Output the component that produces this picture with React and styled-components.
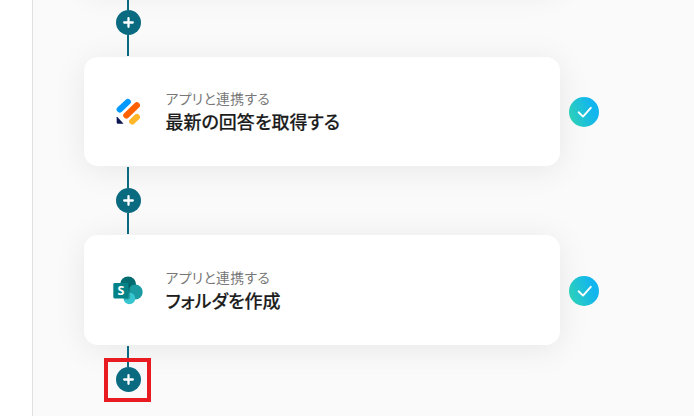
import styled, { createGlobalStyle } from 'styled-components';

const steps = [
  { id: 1, app: 'form', label: 'アプリと連携する', title: '最新の回答を取得する' },
  { id: 2, app: 'sharepoint', label: 'アプリと連携する', title: 'フォルダを作成' },
];

const FormIcon = () => (
  <svg width="32" height="32" viewBox="0 0 32 32">
    <g strokeLinecap="round" strokeWidth="6.1">
      <path d="M7.7 13.5L15.8 5.9" stroke="#0099ff" />
      <path d="M14.3 19.5L24.9 9.3" stroke="#ff6100" />
      <path d="M20.2 25.4L24.9 21" stroke="#ffb629" />
    </g>
    <path d="M5.4 20.9L11.6 27.7H6.2Q4.7 27.7 4.7 26.2V21.2Q4.8 20.4 5.4 20.9Z" fill="#0a1551" />
  </svg>
);

const SharePointIcon = () => (
  <svg width="32" height="32" viewBox="0 0 32 32">
    <circle cx="16.1" cy="9.5" r="8" fill="#036c70" />
    <circle cx="23.3" cy="17" r="7.4" fill="#1a9ba1" />
    <circle cx="17.4" cy="23.4" r="5.8" fill="#37c6d0" />
    <path d="M12 9H17.1Q18.1 9 18.1 10.4V22.3Q18.1 24.6 16.4 24.6H12Z" fill="#000" opacity="0.2" />
    <rect x="1.3" y="8" width="15.4" height="15.4" rx="1.4" fill="#038387" />
    <text
      x="9"
      y="20"
      fill="#fff"
      textAnchor="middle"
      fontFamily="'Open Sans', sans-serif"
      fontSize="12.5"
      fontWeight="700"
    >
      S
    </text>
  </svg>
);

const AddIcon = () => (
  <svg width="11" height="11" viewBox="0 0 11 11">
    <path d="M5.5 1.2V9.8M1.2 5.5H9.8" stroke="#fff" strokeWidth="2.3" strokeLinecap="round" />
  </svg>
);

const CheckIcon = () => (
  <svg width="30" height="30" viewBox="0 0 30 30" fill="none">
    <path
      d="M9.6 15.3L14 19.6L21.8 10.8"
      stroke="#fff"
      strokeWidth="1.9"
      strokeLinecap="round"
      strokeLinejoin="round"
    />
  </svg>
);

const Step = ({ app, label, title }) => (
  <StepRow>
    <Card>
      <IconBox>{app === 'form' ? <FormIcon /> : <SharePointIcon />}</IconBox>
      <Texts>
        <Label>{label}</Label>
        <Title>{title}</Title>
      </Texts>
    </Card>
    <Status>
      <CheckIcon />
    </Status>
  </StepRow>
);

const Connector = ({ last }) => (
  <ConnectorBox>
    <Line />
    <AddButton aria-label="追加">
      <AddIcon />
    </AddButton>
    {last ? <Highlight /> : <Line />}
  </ConnectorBox>
);

export default function App() {
  return (
    <>
      <GlobalStyle />
      <Page>
        <Sidebar />
        <Canvas>
          <Flow>
            <Card />
            <Connector />
            <Step {...steps[0]} />
            <Connector />
            <Step {...steps[1]} />
            <Connector last />
          </Flow>
        </Canvas>
      </Page>
    </>
  );
}

const GlobalStyle = createGlobalStyle`
  * {
    box-sizing: border-box;
  }
  body {
    margin: 0;
    overflow: hidden;
    font-family: 'Noto Sans CJK JP', sans-serif;
    font-feature-settings: 'palt';
  }
`;

const Page = styled.div`
  display: flex;
  height: 416px;
  overflow: hidden;
`;

const Sidebar = styled.aside`
  flex: 0 0 33px;
  background: #ffffff;
  border-right: 1px solid #e0e0e0;
`;

const Canvas = styled.main`
  flex: 1;
  padding-left: 51px;
  background: #fafafa;
  overflow: hidden;
`;

const Flow = styled.div`
  display: flex;
  flex-direction: column;
  margin-top: -122px;
`;

const StepRow = styled.div`
  display: flex;
  align-items: center;
  gap: 9px;
`;

const Card = styled.section`
  display: flex;
  align-items: center;
  flex-shrink: 0;
  width: 476px;
  height: 109.5px;
  padding-left: 28px;
  border-radius: 14px;
  background: #ffffff;
  box-shadow: 0 4px 32px rgba(0, 0, 0, 0.08);
`;

const IconBox = styled.div`
  display: flex;
  width: 32px;
  height: 32px;
  margin-top: 2px;
`;

const Texts = styled.div`
  margin-left: 21.5px;
`;

const Label = styled.div`
  padding-top: 1px;
  font-size: 13.8px;
  line-height: 20px;
  letter-spacing: 0.4px;
  color: #777777;
`;

const Title = styled.div`
  padding-bottom: 1px;
  font-size: 18px;
  font-weight: 500;
  line-height: 26px;
  color: #1c1c1c;
  -webkit-text-stroke: 0.15px #1c1c1c;
`;

const Status = styled.div`
  display: flex;
  width: 30px;
  height: 30px;
  margin-top: 1.5px;
  border-radius: 50%;
  background: linear-gradient(70deg, #2fd3b5 5%, #12b5ee 75%);
`;

const ConnectorBox = styled.div`
  position: relative;
  display: flex;
  flex-direction: column;
  align-items: center;
  width: 88px;
  height: 69px;
  padding: 1px 0;
`;

const Line = styled.div`
  flex: 0 0 21px;
  width: 2px;
  background: #0a6a80;
`;

const AddButton = styled.button`
  display: flex;
  flex-shrink: 0;
  align-items: center;
  justify-content: center;
  width: 25px;
  height: 25px;
  padding: 0;
  border: none;
  border-radius: 50%;
  background: #0a6a80;
`;

const Highlight = styled.div`
  position: absolute;
  top: 13.5px;
  left: 20px;
  width: 47px;
  height: 44px;
  border: 4px solid #e81c20;
`;
